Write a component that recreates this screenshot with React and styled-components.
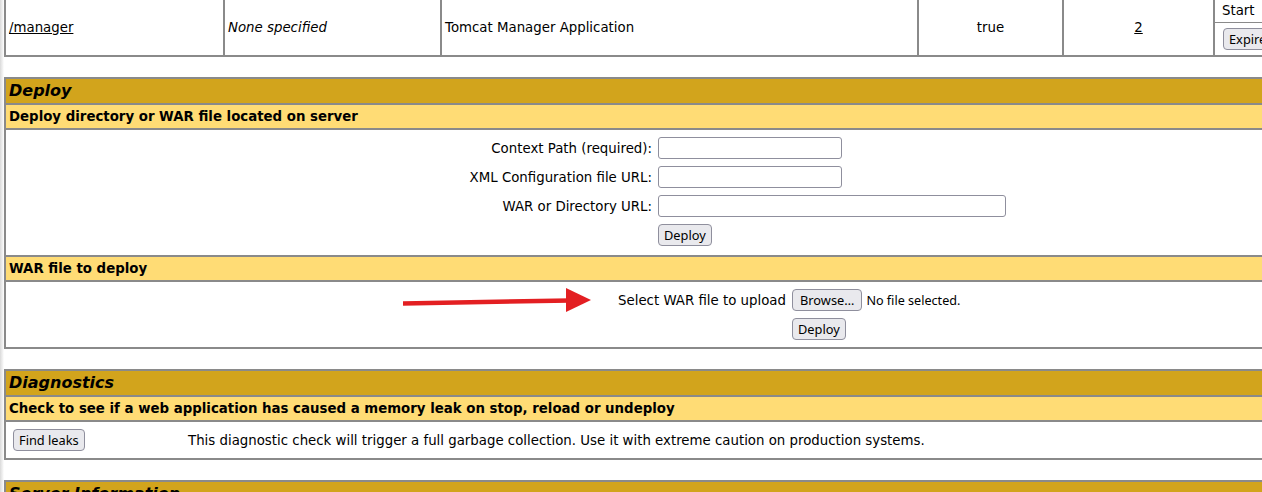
import React from 'react';
import styled, { createGlobalStyle } from 'styled-components';

const GlobalStyle = createGlobalStyle`
  html, body {
    margin: 0;
    padding: 0;
    overflow: hidden;
    background: #fff;
  }
  body {
    font-family: "DejaVu Sans", "Liberation Sans", sans-serif;
    color: #000;
  }
`;

const Page = styled.div`
  position: relative;
  width: 1470px;
  padding-left: 4px;
  margin-top: -2px;

  &::before {
    content: '';
    position: fixed;
    left: 0;
    top: 0;
    bottom: 0;
    width: 4px;
    background: linear-gradient(to right, #d9d9d9, rgba(255, 255, 255, 0));
  }
`;

const Table = styled.table`
  width: 1465px;
  border: 1px solid #8a8a8a;
  border-spacing: 0;
  table-layout: fixed;
  margin-bottom: 20px;
`;

const Cell = styled.td`
  border: 1px solid #8a8a8a;
  padding: 3px;
  font-size: 13.33px;
  line-height: 16px;
  text-align: ${p => p.$align || 'left'};
  vertical-align: middle;
  font-style: ${p => (p.$italic ? 'italic' : 'normal')};
  width: ${p => (p.$w ? `${p.$w}px` : 'auto')};
`;

const TitleCell = styled.td`
  border: 1px solid #8a8a8a;
  padding: 3px;
  background: #d2a41c;
  font-size: 16px;
  line-height: 18px;
  font-weight: bold;
  font-style: italic;
`;

const HeaderCell = styled.td`
  border: 1px solid #8a8a8a;
  padding: 3px;
  background: #ffdc75;
  font-size: 13.33px;
  line-height: 17px;
  font-weight: bold;
`;

const BodyCell = styled.td`
  border: 1px solid #8a8a8a;
  padding: 3px;
  font-size: 13.33px;
`;

const Link = styled.a`
  color: #000;
  text-decoration: underline;
`;

const CommandCell = styled.td`
  border: 1px solid #8a8a8a;
  padding: 0;
  font-size: 13.33px;
  vertical-align: top;
  overflow: hidden;
`;

const CommandTop = styled.div`
  height: 22px;
  line-height: 22px;
  padding-left: 7px;
  border-bottom: 1px solid #8a8a8a;
  white-space: nowrap;
`;

const CommandBottom = styled.div`
  padding: 5px 8px 5px 8px;
  white-space: nowrap;
`;

const Button = styled.button`
  font-family: "Noto Sans", "Open Sans", sans-serif;
  font-size: 12.8px;
  height: 22px;
  padding: 0 ${p => p.$pad || 5}px;
  margin: 0;
  background: #e9e9ed;
  color: #000;
  border: 1px solid #8f8f9d;
  border-radius: 4px;
  line-height: 18px;
  vertical-align: middle;
`;

const Form = styled.div`
  display: grid;
  grid-template-columns: ${p => p.$label}px auto;
  column-gap: 6px;
  row-gap: 7px;
  align-items: center;
  justify-content: start;
  margin-left: ${p => p.$indent}px;
  padding: 4px 0 ${p => p.$bottom}px;
`;

const Label = styled.div`
  text-align: right;
  white-space: nowrap;
`;

const TextInput = styled.input`
  box-sizing: border-box;
  width: ${p => p.$w}px;
  height: 22px;
  margin: 0;
  border: 1px solid #8f8f9d;
  border-radius: 3px;
  background: #fff;
`;

const FilePicker = styled.div`
  display: flex;
  align-items: center;
  gap: 4px;
`;

const FileState = styled.span`
  font-family: "Noto Sans", "Open Sans", sans-serif;
  font-size: 12.6px;
`;

const DiagRow = styled.div`
  display: grid;
  grid-template-columns: 175px auto;
  align-items: center;
  padding: 4px 3px 4px 4px;
`;

const Arrow = styled.svg`
  position: absolute;
  left: 400px;
  top: 287px;
`;

const Spacer = styled.div`
  grid-column: 2;
`;

export default function App() {
  return (
    <>
      <GlobalStyle />
      <Page>
        <Table>
          <tbody>
            <tr>
              <Cell $w={211}><Link href="#">/manager</Link></Cell>
              <Cell $w={209} $italic>None specified</Cell>
              <Cell $w={469}>Tomcat Manager Application</Cell>
              <Cell $w={137} $align="center">true</Cell>
              <Cell $w={143} $align="center"><Link href="#">2</Link></Cell>
              <CommandCell>
                <CommandTop>Start&nbsp; Stop&nbsp; Reload&nbsp; Undeploy</CommandTop>
                <CommandBottom>
                  <Button>Expire sessions</Button> with idle ≥ 30 minutes
                </CommandBottom>
              </CommandCell>
            </tr>
          </tbody>
        </Table>

        <Table>
          <tbody>
            <tr><TitleCell>Deploy</TitleCell></tr>
            <tr><HeaderCell>Deploy directory or WAR file located on server</HeaderCell></tr>
            <tr>
              <BodyCell>
                <Form $label={190} $indent={453} $bottom={6}>
                  <Label>Context Path (required):</Label>
                  <TextInput type="text" $w={184} />
                  <Label>XML Configuration file URL:</Label>
                  <TextInput type="text" $w={184} />
                  <Label>WAR or Directory URL:</Label>
                  <TextInput type="text" $w={348} />
                  <Spacer><Button>Deploy</Button></Spacer>
                </Form>
              </BodyCell>
            </tr>
            <tr><HeaderCell>WAR file to deploy</HeaderCell></tr>
            <tr>
              <BodyCell>
                <Form $label={172} $indent={605} $bottom={4}>
                  <Label>Select WAR file to upload</Label>
                  <FilePicker>
                    <Button $pad={7}>Browse…</Button>
                    <FileState>No file selected.</FileState>
                  </FilePicker>
                  <Spacer><Button>Deploy</Button></Spacer>
                </Form>
              </BodyCell>
            </tr>
          </tbody>
        </Table>

        <Table>
          <tbody>
            <tr><TitleCell>Diagnostics</TitleCell></tr>
            <tr><HeaderCell>Check to see if a web application has caused a memory leak on stop, reload or undeploy</HeaderCell></tr>
            <tr>
              <BodyCell>
                <DiagRow>
                  <div><Button>Find leaks</Button></div>
                  <div>This diagnostic check will trigger a full garbage collection. Use it with extreme caution on production systems.</div>
                </DiagRow>
              </BodyCell>
            </tr>
          </tbody>
        </Table>

        <Table>
          <tbody>
            <tr><TitleCell>Server Information</TitleCell></tr>
            <tr><HeaderCell>Tomcat Version</HeaderCell></tr>
          </tbody>
        </Table>

        <Arrow width="195" height="30" viewBox="400 285 195 30">
          <line x1="403" y1="303.5" x2="570" y2="300.5" stroke="#e31f22" strokeWidth="4.5" />
          <polygon points="566,288 591,300 566,312" fill="#e31f22" />
        </Arrow>
      </Page>
    </>
  );
}
